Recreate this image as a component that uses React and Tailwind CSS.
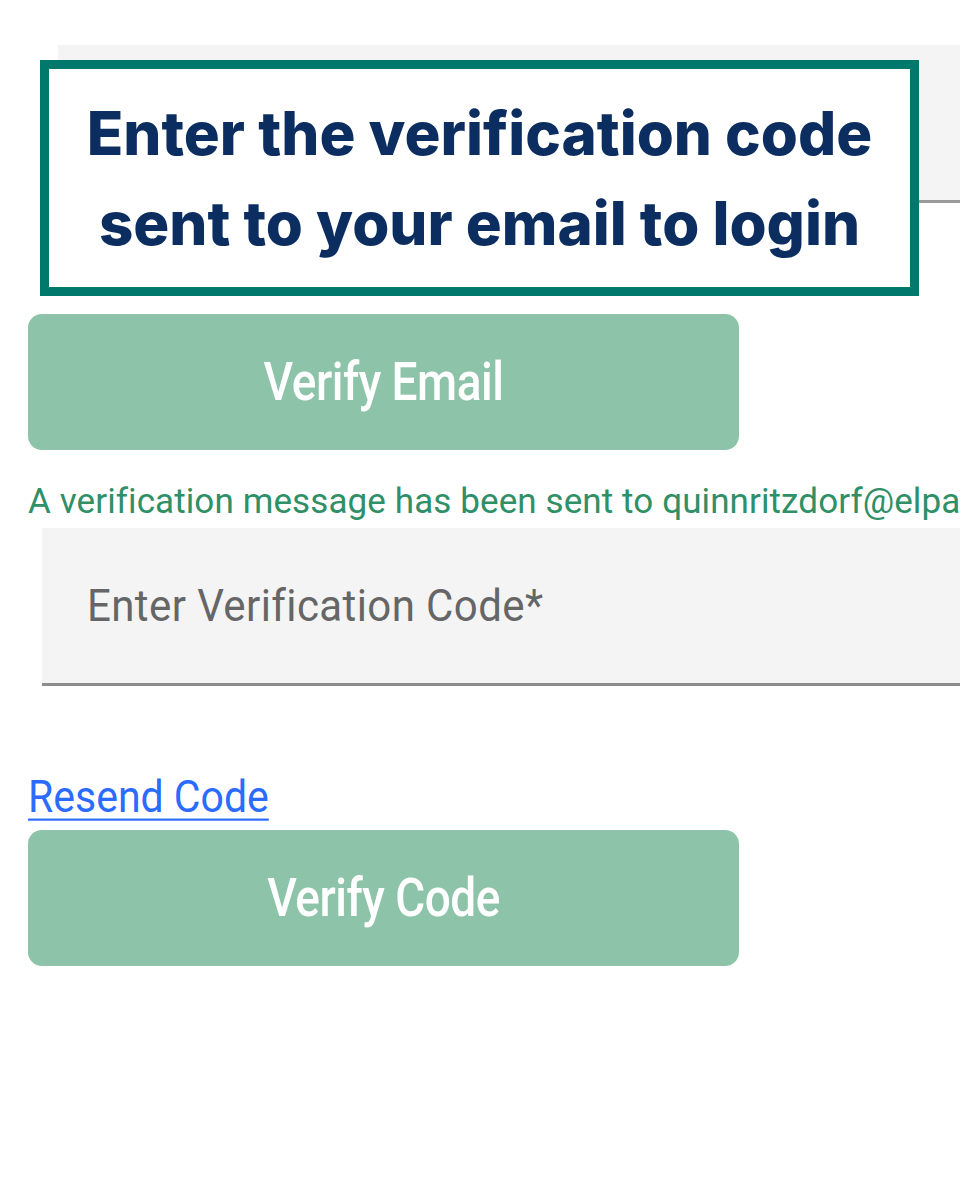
export default function App() {
  return (
    <div className="relative w-[960px] h-[1200px] overflow-hidden bg-white font-['Roboto',sans-serif]">
      {/* email field behind the callout */}
      <div className="ml-[58px] mt-[45px] h-[158px] bg-[#f4f4f4] border-b-[3px] border-[#9a9a9a]" />

      <div className="ml-[28px] mt-[111px] w-[711px] h-[136px] rounded-[14px] bg-[#8dc3a8] flex items-center justify-center">
        <span className="text-white text-[46px] font-medium scale-y-[1.15] tracking-[-0.5px]">Verify Email</span>
      </div>

      <div className="mt-[32px] pl-[28px] whitespace-nowrap text-[#2f8f66] text-[35px] leading-[40px] tracking-[0.1px]">
        A verification message has been sent to quinnritzdorf@elpasotexas.gov
      </div>

      <div className="ml-[42px] mt-[6px] h-[158px] bg-[#f4f4f4] border-b-[3px] border-[#8c8c8c] flex items-center pl-[45px]">
        <span className="text-[#666666] text-[42px] scale-y-[1.06] tracking-[0.4px]">Enter Verification Code*</span>
      </div>

      <div className="pl-[28px] mt-[90px] h-[44px] flex items-center">
        <a href="#" className="text-[#2b6bff] text-[41px] underline underline-offset-[6px] decoration-2 scale-y-[1.08] origin-left">Resend Code</a>
      </div>

      <div className="ml-[28px] mt-[10px] w-[711px] h-[136px] rounded-[14px] bg-[#8dc3a8] flex items-center justify-center">
        <span className="text-white text-[46px] font-medium scale-y-[1.15] tracking-[-0.5px]">Verify Code</span>
      </div>

      {/* callout overlay */}
      <div className="absolute left-[40px] top-[60px] w-[879px] h-[236px] border-[9px] border-[#00786b] bg-white flex flex-col items-center justify-center">
        <div className="text-[#0b2d5f] font-['Inter',sans-serif] font-extrabold text-[60px] leading-[90px] text-center">
          <div>Enter the verification code</div>
          <div>sent to your email to login</div>
        </div>
      </div>
    </div>
  );
}
